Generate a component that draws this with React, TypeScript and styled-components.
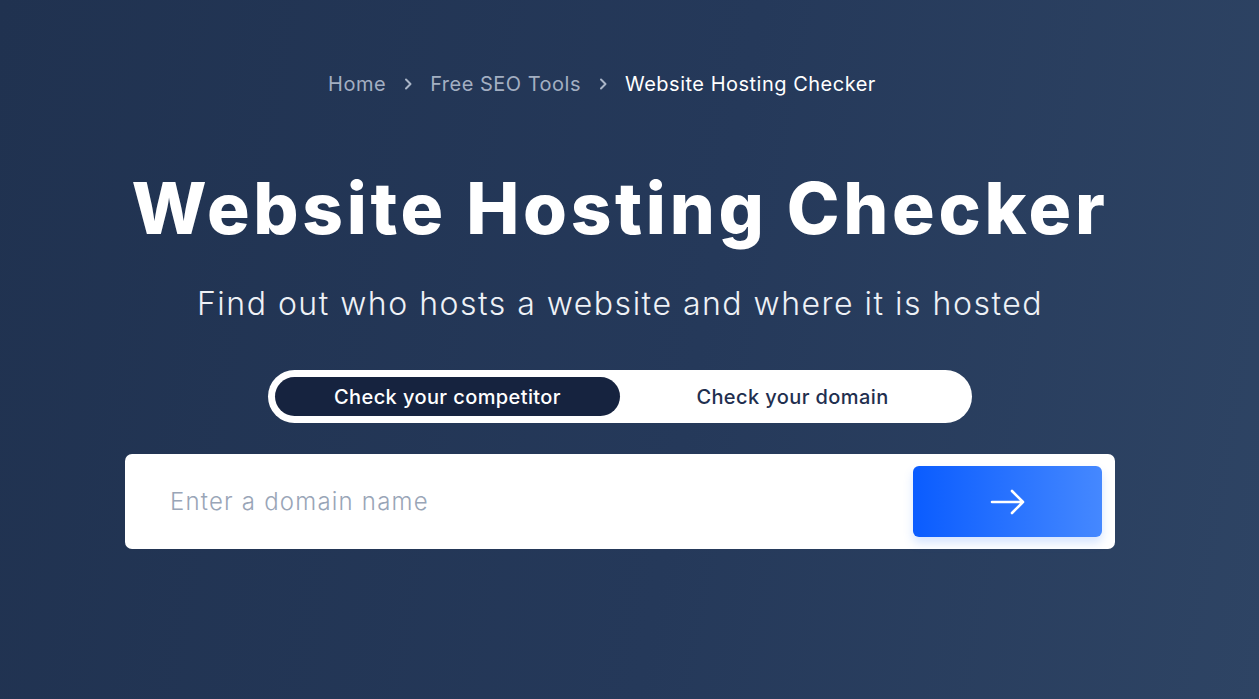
import React, { useState } from "react";
import styled, { createGlobalStyle } from "styled-components";

const GlobalStyle = createGlobalStyle`
  html, body {
    margin: 0;
    padding: 0;
  }
  body {
    font-family: "Inter", "Noto Sans", sans-serif;
    background: #243755;
  }
  * {
    box-sizing: border-box;
  }
`;

const App = () => {
  const [mode, setMode] = useState<"competitor" | "domain">("competitor");

  return (
    <>
      <GlobalStyle />
      <StPage>
        <StContent>
          <StBreadcrumb>
            <StCrumb>Home</StCrumb>
            <StChevron />
            <StCrumb>Free SEO Tools</StCrumb>
            <StChevron />
            <StCrumb $current>Website Hosting Checker</StCrumb>
          </StBreadcrumb>

          <StTitle>Website Hosting Checker</StTitle>
          <StSubtitle>Find out who hosts a website and where it is hosted</StSubtitle>

          <StToggle>
            <StToggleButton
              $active={mode === "competitor"}
              onClick={() => setMode("competitor")}
            >
              Check your competitor
            </StToggleButton>
            <StToggleButton
              $active={mode === "domain"}
              onClick={() => setMode("domain")}
            >
              Check your domain
            </StToggleButton>
          </StToggle>

          <StSearchBox>
            <StInput placeholder="Enter a domain name" />
            <StSubmit aria-label="Check">
              <svg width="38" height="38" viewBox="0 0 38 38" fill="none">
                <path
                  d="M3 19H34M23 8L34 19L23 30"
                  stroke="#fff"
                  strokeWidth="2.6"
                  strokeLinecap="round"
                  strokeLinejoin="round"
                />
              </svg>
            </StSubmit>
          </StSearchBox>
        </StContent>
      </StPage>
    </>
  );
};

export default App;

const StChevron = () => (
  <StChevronIcon width="10" height="12" viewBox="0 0 10 12" fill="none">
    <path
      d="M3 1.5L7.5 6L3 10.5"
      stroke="#aab5c7"
      strokeWidth="2"
      strokeLinecap="round"
      strokeLinejoin="round"
    />
  </StChevronIcon>
);

const StPage = styled.div`
  width: 100%;
  height: 699px;
  overflow: hidden;
  background: linear-gradient(100deg, #203250 0%, #25395a 55%, #2e4464 100%);
`;

const StContent = styled.main`
  width: 1240px;
  display: flex;
  flex-direction: column;
  align-items: center;
  padding-top: 70px;
`;

const StBreadcrumb = styled.nav`
  display: flex;
  align-items: center;
  gap: 17px;
  margin-right: 36px;
  height: 28px;
`;

const StCrumb = styled.span<{ $current?: boolean }>`
  font-size: 20px;
  font-weight: 400;
  letter-spacing: 0.5px;
  color: ${({ $current }) => ($current ? "#ffffff" : "#a3afc2")};
`;

const StChevronIcon = styled.svg`
  display: block;
`;

const StTitle = styled.h1`
  margin: 66px 0 0;
  font-size: 71px;
  font-weight: 800;
  line-height: 88px;
  color: #ffffff;
  letter-spacing: 3.7px;
`;

const StSubtitle = styled.p`
  margin: 32px 0 0;
  font-size: 32px;
  font-weight: 300;
  line-height: 40px;
  letter-spacing: 1.5px;
  color: #eef1f6;
`;

const StToggle = styled.div`
  margin-top: 46px;
  width: 704px;
  height: 53px;
  padding: 7px;
  border-radius: 27px;
  background: #ffffff;
  display: grid;
  grid-template-columns: 345px 1fr;
`;

const StToggleButton = styled.button<{ $active: boolean }>`
  border: none;
  border-radius: 20px;
  font-family: inherit;
  font-size: 20px;
  font-weight: 450;
  letter-spacing: 0.4px;
  cursor: pointer;
  background: ${({ $active }) => ($active ? "#16233f" : "transparent")};
  color: ${({ $active }) => ($active ? "#ffffff" : "#1f2f4f")};
`;

const StSearchBox = styled.div`
  margin-top: 31px;
  width: 990px;
  height: 95px;
  background: #ffffff;
  border-radius: 7px;
  display: flex;
  align-items: center;
  padding: 12px 13px 12px 43px;
  gap: 20px;
`;

const StInput = styled.input`
  flex: 1;
  border: none;
  outline: none;
  font-family: inherit;
  font-size: 24px;
  font-weight: 300;
  letter-spacing: 1.2px;
  color: #1f2f4f;

  &::placeholder {
    color: #99a5b7;
  }
`;

const StSubmit = styled.button`
  width: 189px;
  height: 71px;
  border: none;
  border-radius: 6px;
  cursor: pointer;
  display: flex;
  align-items: center;
  justify-content: center;
  background: linear-gradient(90deg, #0a5cff 0%, #4588ff 100%);
  box-shadow: 0 6px 10px rgba(90, 150, 255, 0.25);
`;
